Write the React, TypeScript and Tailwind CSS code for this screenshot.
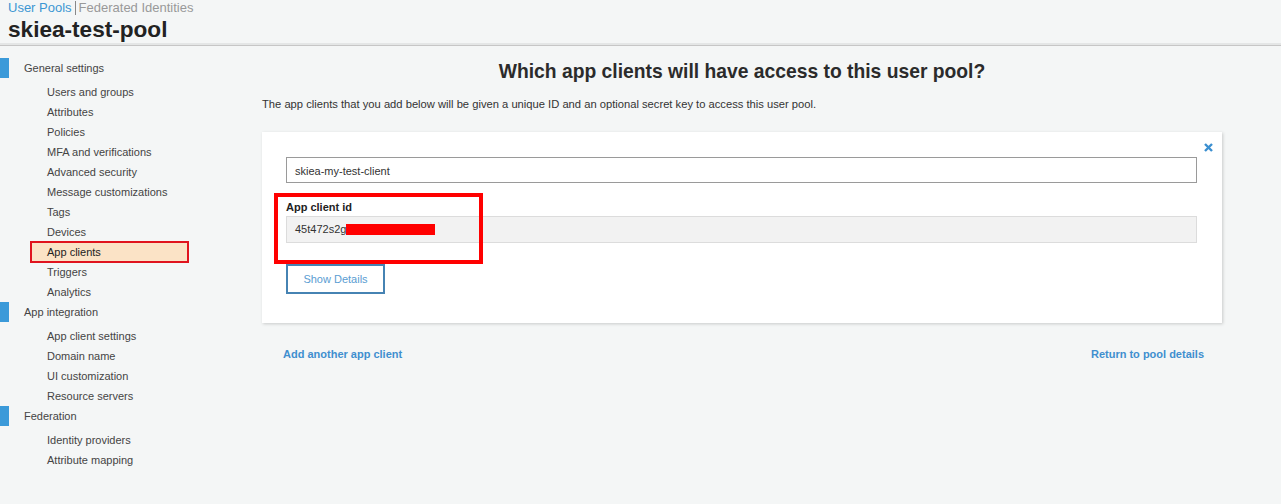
import React from 'react';

const sections = [
  {
    title: 'General settings',
    items: [
      'Users and groups',
      'Attributes',
      'Policies',
      'MFA and verifications',
      'Advanced security',
      'Message customizations',
      'Tags',
      'Devices',
      'App clients',
      'Triggers',
      'Analytics',
    ],
  },
  {
    title: 'App integration',
    items: ['App client settings', 'Domain name', 'UI customization', 'Resource servers'],
  },
  {
    title: 'Federation',
    items: ['Identity providers', 'Attribute mapping'],
  },
];

function Sidebar() {
  return (
    <nav className="w-[262px] shrink-0 pt-[12px] text-[11px] text-[#444]">
      {sections.map((s) => (
        <div key={s.title}>
          <div className="flex h-[20px] items-center">
            <span className="h-[20px] w-[9px] bg-[#3b9ad9]" />
            <span className="ml-[15px]">{s.title}</span>
          </div>
          <ul className="mt-[4px]">
            {s.items.map((item) =>
              item === 'App clients' ? (
                <li
                  key={item}
                  className="-my-px ml-[30px] flex h-[22px] w-[159px] items-center border-2 border-[#e0141e] bg-[#fbe3c6] pl-[15px] text-[#222]"
                >
                  {item}
                </li>
              ) : (
                <li key={item} className="flex h-[20px] items-center pl-[47px]">
                  {item}
                </li>
              )
            )}
          </ul>
        </div>
      ))}
    </nav>
  );
}

function ClientCard() {
  return (
    <div className="relative mt-[20px] bg-white pb-[29px] pl-[24px] pr-[25px] pt-[25px] shadow-[1px_1px_3px_rgba(0,0,0,0.18)]">
      <button className="absolute right-[9px] top-[11px]">
        <svg width="9" height="9" viewBox="0 0 9 9">
          <path d="M1 1 L8 8 M8 1 L1 8" stroke="#3b8fd0" strokeWidth="2.4" />
        </svg>
      </button>
      <div className="flex h-[26px] items-center border border-[#9a9a9a] pl-[8px] pt-[2px] text-[11px] text-[#333]">
        skiea-my-test-client
      </div>
      <div className="mt-[16px] text-[11px] font-bold leading-[16px] text-[#222]">App client id</div>
      <div className="mt-[1px] flex h-[27px] items-center border border-[#dcdcdc] bg-[#f2f2f2] pl-[8px] text-[11px] text-[#333]">
        45t472s2g
        <span className="inline-block h-[11px] w-[89px] bg-[#ff0000]" />
      </div>
      <button className="mt-[21px] h-[30px] w-[99px] border-2 border-[#4683b3] pt-px text-[11px] text-[#5a9dd2]">
        Show Details
      </button>
      <div className="pointer-events-none absolute left-[12px] top-[61px] h-[71px] w-[209px] border-4 border-[#ff0000]" />
    </div>
  );
}

export default function App() {
  return (
    <div
      className="min-h-[504px] bg-[#f4f6f6]"
      style={{ fontFamily: '"Liberation Sans", Arial, sans-serif' }}
    >
      <header className="h-[46px] border-b border-[#c6c6c6] pl-[8px] shadow-[0_-2px_0_#e4e6e6_inset]">
        <div className="flex h-[16px] items-center text-[13px]">
          <a className="text-[#3c97d3]">User Pools</a>
          <span className="mx-[3px] h-[14px] w-px bg-[#888]" />
          <a className="text-[#999]">Federated Identities</a>
        </div>
        <h1 className="h-[28px] text-[22.6px] font-bold leading-[28px] text-[#222]">skiea-test-pool</h1>
      </header>
      <div className="flex">
        <Sidebar />
        <main className="w-[960px] shrink-0 pt-[14px]">
          <h2 className="text-center text-[19.3px] font-bold leading-[24px] text-[#2b2b2b]">
            Which app clients will have access to this user pool?
          </h2>
          <p className="mt-[12px] text-[11.2px] leading-[16px] text-[#333]">
            The app clients that you add below will be given a unique ID and an optional secret key to access this user pool.
          </p>
          <ClientCard />
          <div className="mt-[23px] flex justify-between pl-[21px] pr-[18px] text-[11px] font-bold leading-[16px] text-[#3f8fcf]">
            <a>Add another app client</a>
            <a>Return to pool details</a>
          </div>
        </main>
      </div>
    </div>
  );
}
